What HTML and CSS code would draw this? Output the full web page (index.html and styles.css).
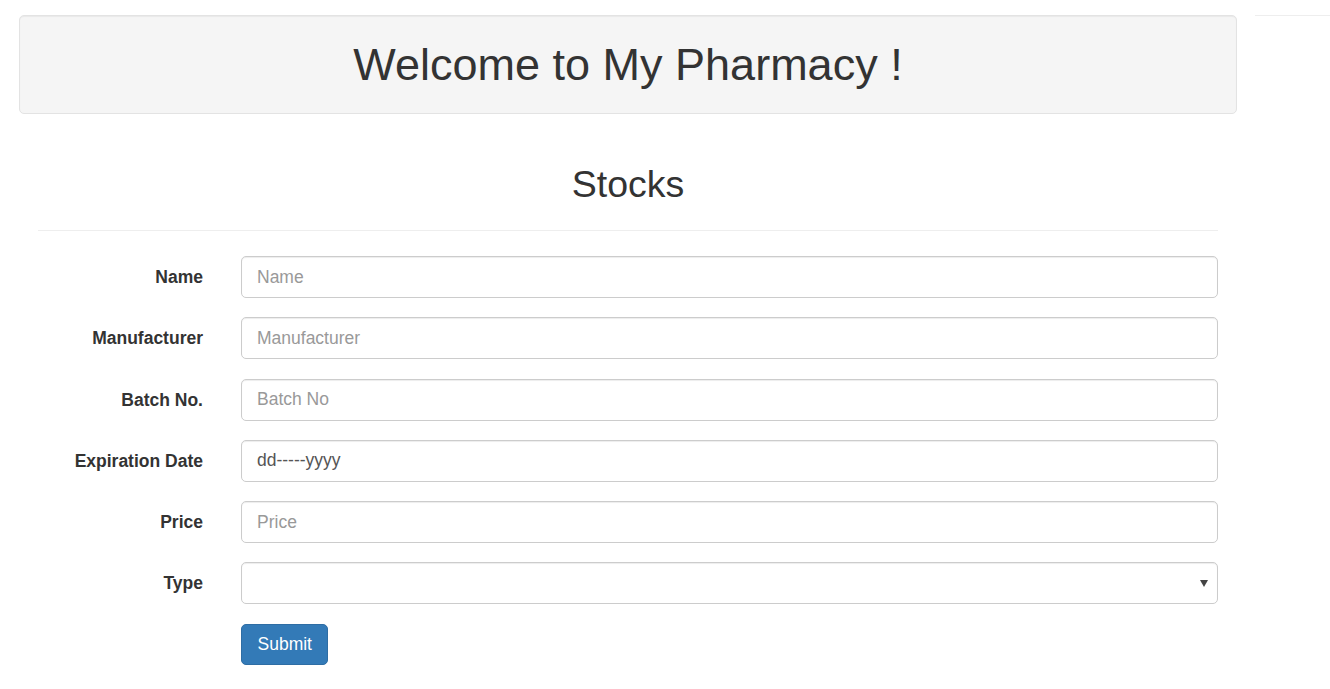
FILE: index.html
```html
<!DOCTYPE html>
<html lang="en">
<head>
<meta charset="utf-8">
<title>My Pharmacy</title>
<link rel="stylesheet" href="styles.css">
</head>
<body>
<div class="page">
  <div class="main">
    <div class="well">
      <h1>Welcome to My Pharmacy !</h1>
    </div>
    <div class="content">
      <h2>Stocks</h2>
      <hr>
      <form class="form">
        <div class="form-group">
          <label for="name">Name</label>
          <input id="name" class="form-control" type="text" placeholder="Name">
        </div>
        <div class="form-group">
          <label for="manu">Manufacturer</label>
          <input id="manu" class="form-control" type="text" placeholder="Manufacturer">
        </div>
        <div class="form-group">
          <label for="batch">Batch No.</label>
          <input id="batch" class="form-control" type="text" placeholder="Batch No">
        </div>
        <div class="form-group">
          <label for="exp">Expiration Date</label>
          <input id="exp" class="form-control" type="text" value="dd-----yyyy">
        </div>
        <div class="form-group">
          <label for="price">Price</label>
          <input id="price" class="form-control" type="text" placeholder="Price">
        </div>
        <div class="form-group">
          <label for="type">Type</label>
          <div class="select-wrap">
            <select id="type" class="form-control select"><option></option></select>
          </div>
        </div>
        <div class="form-group">
          <span></span>
          <div><button type="button" class="btn">Submit</button></div>
        </div>
      </form>
    </div>
  </div>
  <div class="side"></div>
</div>
</body>
</html>
```

FILE: styles.css
```css
* { box-sizing: border-box; }
body {
  margin: 0;
  font-family: "Liberation Sans", Arial, sans-serif;
  font-size: 17.5px;
  line-height: 1.42857;
  color: #333;
  background: #fff;
}
.page { display: flex; align-items: flex-start; }
.main { width: 1218px; margin-left: 19px; flex: none; }
.side { flex: 1; margin-left: 18px; margin-top: 15px; border-top: 1px solid #eee; }
.well {
  margin-top: 15px;
  height: 99px;
  background: #f5f5f5;
  border: 1px solid #e3e3e3;
  border-radius: 5px;
  box-shadow: inset 0 1px 1px rgba(0,0,0,.05);
  padding: 24px 24px 0;
}
h1 {
  margin: 0;
  font-size: 45px;
  font-weight: 500;
  line-height: 49.5px;
  text-align: center;
}
.content { padding: 0 19px; }
h2 {
  margin: 50px 0 0;
  font-size: 37.5px;
  font-weight: 500;
  line-height: 41px;
  text-align: center;
}
hr {
  margin: 25px 0 25px;
  border: 0;
  border-top: 1px solid #eee;
}
.form-group {
  display: grid;
  grid-template-columns: 165px 1fr;
  column-gap: 38px;
  margin-bottom: 19.25px;
}
label {
  text-align: right;
  font-weight: bold;
  padding-top: 9px;
}
.form-control {
  display: block;
  width: 100%;
  height: 42px;
  padding: 7.5px 15px;
  font-family: inherit;
  font-size: 17.5px;
  line-height: 1.42857;
  color: #555;
  background: #fff;
  border: 1px solid #ccc;
  border-radius: 5px;
  box-shadow: inset 0 1px 1px rgba(0,0,0,.075);
  outline: none;
}
.form-control::placeholder { color: #999; }
.select-wrap { position: relative; }
.select { appearance: none; -webkit-appearance: none; }
.select-wrap::after {
  content: "";
  position: absolute;
  right: 10px;
  top: 18px;
  border-left: 4px solid transparent;
  border-right: 4px solid transparent;
  border-top: 7px solid #444;
  pointer-events: none;
}
.btn {
  height: 41px;
  padding: 7.5px 15.5px;
  font-family: inherit;
  font-size: 17.5px;
  line-height: 1.42857;
  color: #fff;
  background: #337ab7;
  border: 1px solid #2e6da4;
  border-radius: 5px;
  cursor: pointer;
}
```
